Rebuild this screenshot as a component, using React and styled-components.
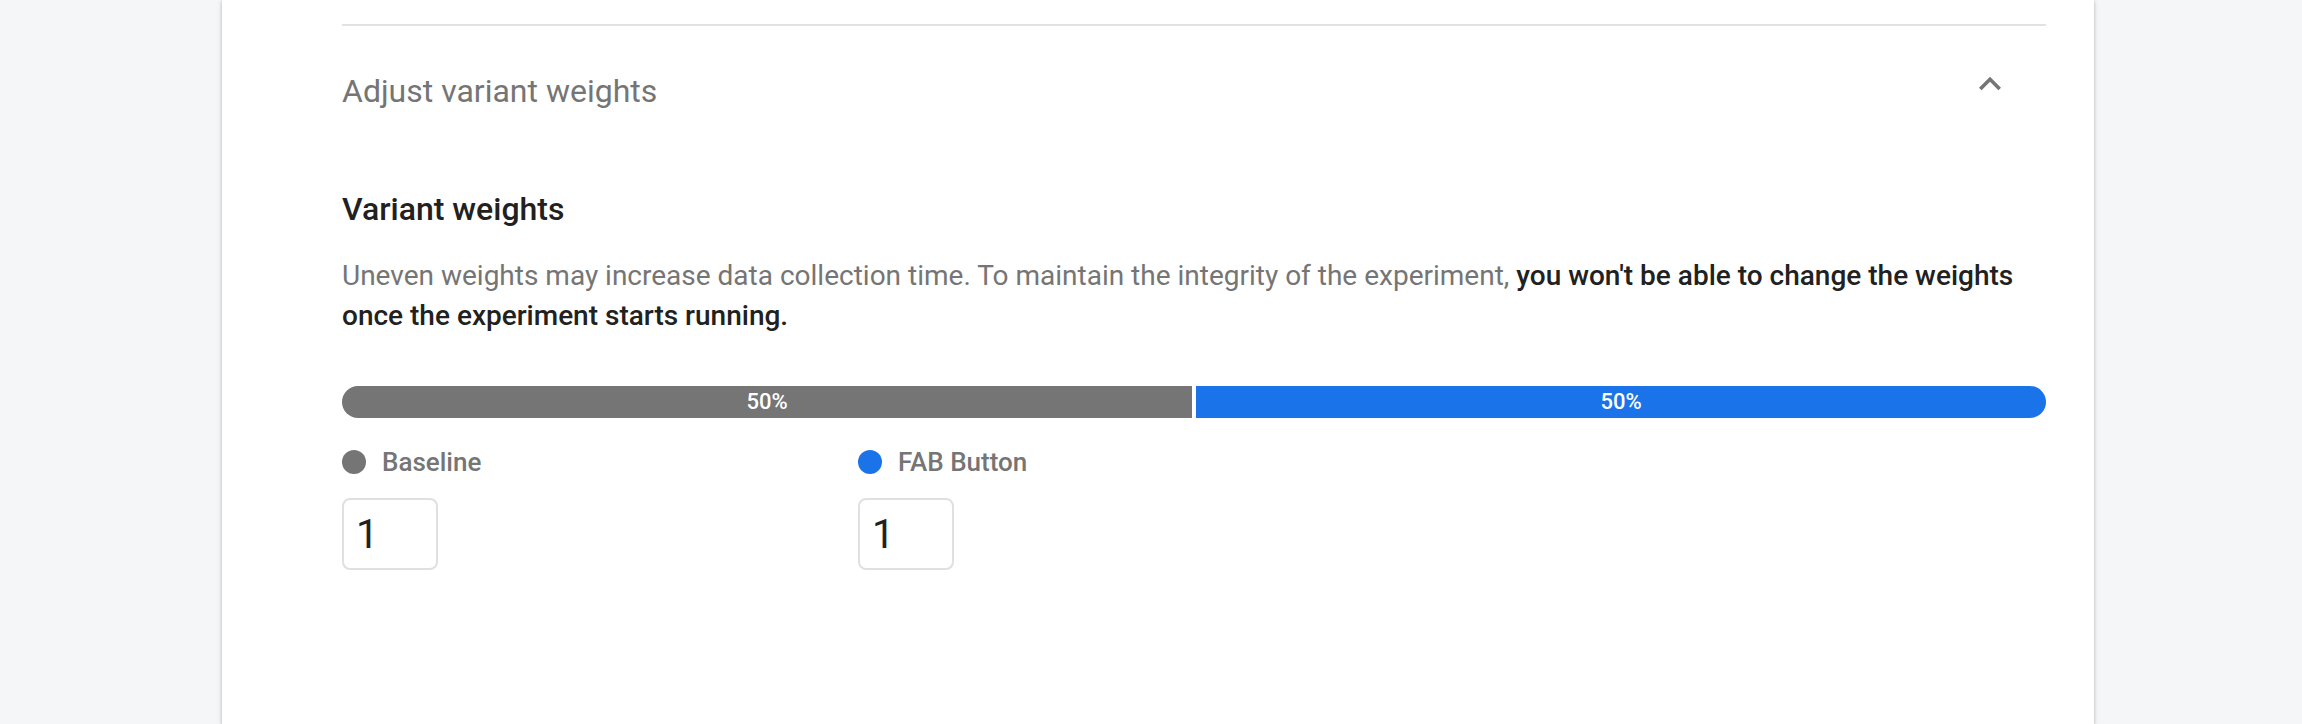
import React from "react";
import styled, { createGlobalStyle } from "styled-components";

const GlobalStyle = createGlobalStyle`
  html, body {
    margin: 0;
    padding: 0;
    background: #f5f6f8;
    font-family: Roboto, "Noto Sans", Arial, sans-serif;
  }
  * { box-sizing: border-box; }
`;

const Page = styled.div`
  display: flex;
  min-height: 724px;
  padding-left: 222px;
  overflow: hidden;
`;

const Card = styled.section`
  width: 1872px;
  min-height: 724px;
  background: #ffffff;
  box-shadow: 0 1px 3px rgba(60, 64, 67, 0.3), 0 2px 6px rgba(60, 64, 67, 0.12);
  padding: 24px 48px 0 120px;
`;

const Divider = styled.hr`
  margin: 0;
  border: 0;
  height: 2px;
  background: #e2e2e2;
`;

const SectionHeader = styled.div`
  display: flex;
  justify-content: space-between;
  align-items: flex-start;
  padding-top: 36px;
`;

const SectionTitle = styled.h2`
  margin: 5px 0 0;
  font-size: 32px;
  line-height: 48px;
  font-weight: 400;
  color: #757575;
`;

const ToggleButton = styled.button`
  display: flex;
  align-items: center;
  justify-content: center;
  width: 44px;
  height: 44px;
  margin-right: 34px;
  padding: 0;
  border: 0;
  background: transparent;
  color: #757575;
  cursor: pointer;
  svg { width: 44px; height: 44px; display: block; }
`;

const Panel = styled.div`
  padding-top: 70px;
`;

const Heading = styled.h3`
  margin: 0;
  font-size: 32px;
  line-height: 48px;
  font-weight: 500;
  color: #212121;
`;

const Description = styled.p`
  margin: 23px 0 0;
  font-size: 28px;
  line-height: 40px;
  color: #757575;
  strong {
    font-weight: 500;
    color: #212121;
  }
`;

const Bar = styled.div`
  display: flex;
  gap: 4px;
  height: 32px;
  margin-top: 50px;
  border-radius: 16px;
  overflow: hidden;
`;

const Segment = styled.div`
  flex: ${(p) => p.$weight} 1 0;
  background: ${(p) => p.$color};
  color: #ffffff;
  font-size: 22px;
  line-height: 32px;
  font-weight: 500;
  text-align: center;
`;

const Variants = styled.div`
  display: flex;
  margin-top: 32px;
`;

const Variant = styled.div`
  width: 516px;
  display: flex;
  flex-direction: column;
  align-items: flex-start;
`;

const LabelRow = styled.div`
  display: flex;
  align-items: center;
  gap: 16px;
  height: 24px;
`;

const Dot = styled.span`
  width: 24px;
  height: 24px;
  border-radius: 50%;
  background: ${(p) => p.$color};
  flex: none;
`;

const Label = styled.span`
  font-size: 26px;
  line-height: 24px;
  font-weight: 500;
  color: #757575;
`;

const WeightInput = styled.input`
  margin-top: 24px;
  width: 96px;
  height: 72px;
  padding: 0 12px;
  border: 2px solid #e0e0e0;
  border-radius: 8px;
  font-family: Roboto, "Noto Sans", Arial, sans-serif;
  font-size: 40px;
  color: #212121;
  background: #fff;
  outline: none;
`;

const variants = [
  { name: "Baseline", color: "#757575", weight: 1 },
  { name: "FAB Button", color: "#1a73e8", weight: 1 },
];

export default function App() {
  const total = variants.reduce((s, v) => s + v.weight, 0);
  return (
    <>
      <GlobalStyle />
      <Page>
        <Card>
          <Divider />
          <SectionHeader>
            <SectionTitle>Adjust variant weights</SectionTitle>
            <ToggleButton aria-label="Collapse">
              <svg viewBox="0 0 24 24" fill="currentColor">
                <path d="M12 8l-6 6 1.41 1.41L12 10.83l4.59 4.58L18 14z" />
              </svg>
            </ToggleButton>
          </SectionHeader>
          <Panel>
            <Heading>Variant weights</Heading>
            <Description>
              Uneven weights may increase data collection time. To maintain the integrity of the
              experiment,{" "}
              <strong>
                you won't be able to change the weights once the experiment starts running.
              </strong>
            </Description>
            <Bar>
              {variants.map((v) => (
                <Segment key={v.name} $color={v.color} $weight={v.weight}>
                  {Math.round((v.weight / total) * 100)}%
                </Segment>
              ))}
            </Bar>
            <Variants>
              {variants.map((v) => (
                <Variant key={v.name}>
                  <LabelRow>
                    <Dot $color={v.color} />
                    <Label>{v.name}</Label>
                  </LabelRow>
                  <WeightInput type="text" defaultValue={v.weight} />
                </Variant>
              ))}
            </Variants>
          </Panel>
        </Card>
      </Page>
    </>
  );
}
